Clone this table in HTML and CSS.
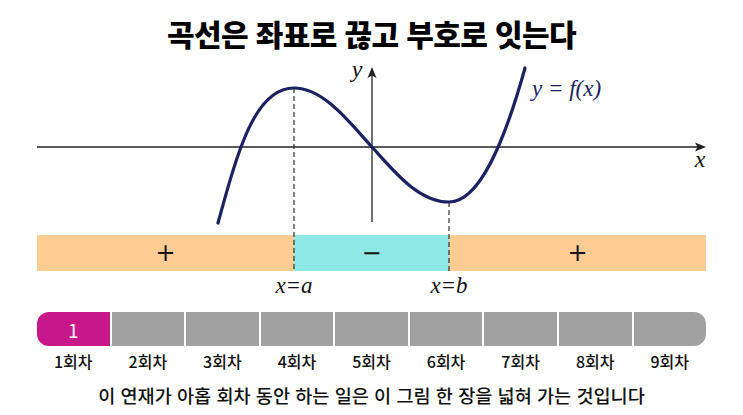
FILE: index.html
```html
<!DOCTYPE html>
<html lang="ko">
<head>
<meta charset="utf-8">
<link rel="stylesheet" href="styles.css">
</head>
<body>
<h1 class="title">곡선은 좌표로 끊고 부호로 잇는다</h1>
<div class="figure">
  <svg class="plot" width="743" height="240" viewBox="0 0 743 240" xmlns="http://www.w3.org/2000/svg">
    <line class="axis" x1="37" y1="87" x2="700" y2="87"/>
    <polygon class="arrow" points="706,87 695,82.5 697.5,87 695,91.5"/>
    <line class="axis" x1="372" y1="162" x2="372" y2="14"/>
    <polygon class="arrow" points="372,7 367.5,18 372,15.5 376.5,18"/>
    <line class="dash" x1="294" y1="28" x2="294" y2="211"/>
    <line class="dash" x1="449" y1="142" x2="449" y2="211"/>
    <path class="curve" d="M218,163 C238,90 255,28 294,28 C324,28 350,63 372,87 C394,111 418,142 449,142 C480,142 505,80 525,8"/>
    <text class="math" x="357" y="17" text-anchor="middle">y</text>
    <text class="math" x="700" y="107" text-anchor="middle">x</text>
    <text class="math fx" x="532" y="36">y = f(x)</text>
    <text class="math root" x="294" y="233" text-anchor="middle">x=a</text>
    <text class="math root" x="449" y="233" text-anchor="middle">x=b</text>
  </svg>
  <div class="sign-bar">
    <div class="sign pos wide">+</div>
    <div class="sign neg narrow">−</div>
    <div class="sign pos wide">+</div>
  </div>
</div>
<div class="progress">
  <div class="step current">1</div>
  <div class="step"></div>
  <div class="step"></div>
  <div class="step"></div>
  <div class="step"></div>
  <div class="step"></div>
  <div class="step"></div>
  <div class="step"></div>
  <div class="step last"></div>
</div>
<div class="step-labels">
  <span>1회차</span><span>2회차</span><span>3회차</span><span>4회차</span><span>5회차</span><span>6회차</span><span>7회차</span><span>8회차</span><span>9회차</span>
</div>
<p class="caption">이 연재가 아홉 회차 동안 하는 일은 이 그림 한 장을 넓혀 가는 것입니다</p>
</body>
</html>
```
FILE: styles.css
```css
html, body {
  margin: 0;
  padding: 0;
  background: #ffffff;
}
body {
  width: 743px;
  height: 415px;
  overflow: hidden;
  font-family: "Noto Sans CJK KR", "Noto Sans", sans-serif;
  color: #111111;
}
.title {
  margin: 0;
  height: 60px;
  box-sizing: border-box;
  padding-top: 6px;
  display: flex;
  align-items: center;
  justify-content: center;
  font-size: 30px;
  font-weight: 900;
  letter-spacing: -0.6px;
  color: #000000;
}
.figure {
  position: relative;
  height: 240px;
}
.plot {
  position: absolute;
  left: 0;
  top: 0;
  z-index: 1;
  overflow: visible;
}
.axis {
  stroke: #222222;
  stroke-width: 1.3;
}
.arrow {
  fill: #222222;
}
.dash {
  stroke: #333333;
  stroke-width: 1.2;
  stroke-dasharray: 5 3;
}
.curve {
  fill: none;
  stroke: #1b2262;
  stroke-width: 3.2;
  stroke-linecap: round;
}
.math {
  font-family: "Liberation Serif", "DejaVu Serif", serif;
  font-style: italic;
  font-size: 24px;
  fill: #111111;
}
.fx {
  fill: #1b2262;
  font-size: 23px;
}
.root {
  font-size: 23px;
}
.sign-bar {
  position: absolute;
  left: 37px;
  top: 175px;
  display: flex;
  height: 36px;
}
.sign {
  display: flex;
  align-items: center;
  justify-content: center;
  font-family: "DejaVu Sans", sans-serif;
  font-size: 24px;
  color: #111111;
}
.wide {
  width: 257px;
}
.narrow {
  width: 155px;
}
.pos {
  background: #fecb93;
}
.neg {
  background: #8ee8e6;
}
.progress {
  display: flex;
  gap: 2px;
  margin: 12px 37px 0;
  height: 34px;
}
.step {
  flex: 1;
  background: #a1a1a1;
  display: flex;
  align-items: center;
  justify-content: center;
  color: #ffffff;
  font-size: 19px;
}
.step.current {
  background: #c8178a;
  border-radius: 12px 0 0 12px;
}
.step.last {
  border-radius: 0 12px 12px 0;
}
.step-labels {
  display: grid;
  grid-template-columns: repeat(9, 1fr);
  gap: 2px;
  margin: 4px 37px 0;
  line-height: 22px;
  font-size: 16px;
  font-weight: 500;
  text-align: center;
  color: #111111;
}
.caption {
  margin: 10px 0 0;
  line-height: 26px;
  font-size: 18.6px;
  font-weight: 500;
  text-align: center;
  color: #111111;
}
```
